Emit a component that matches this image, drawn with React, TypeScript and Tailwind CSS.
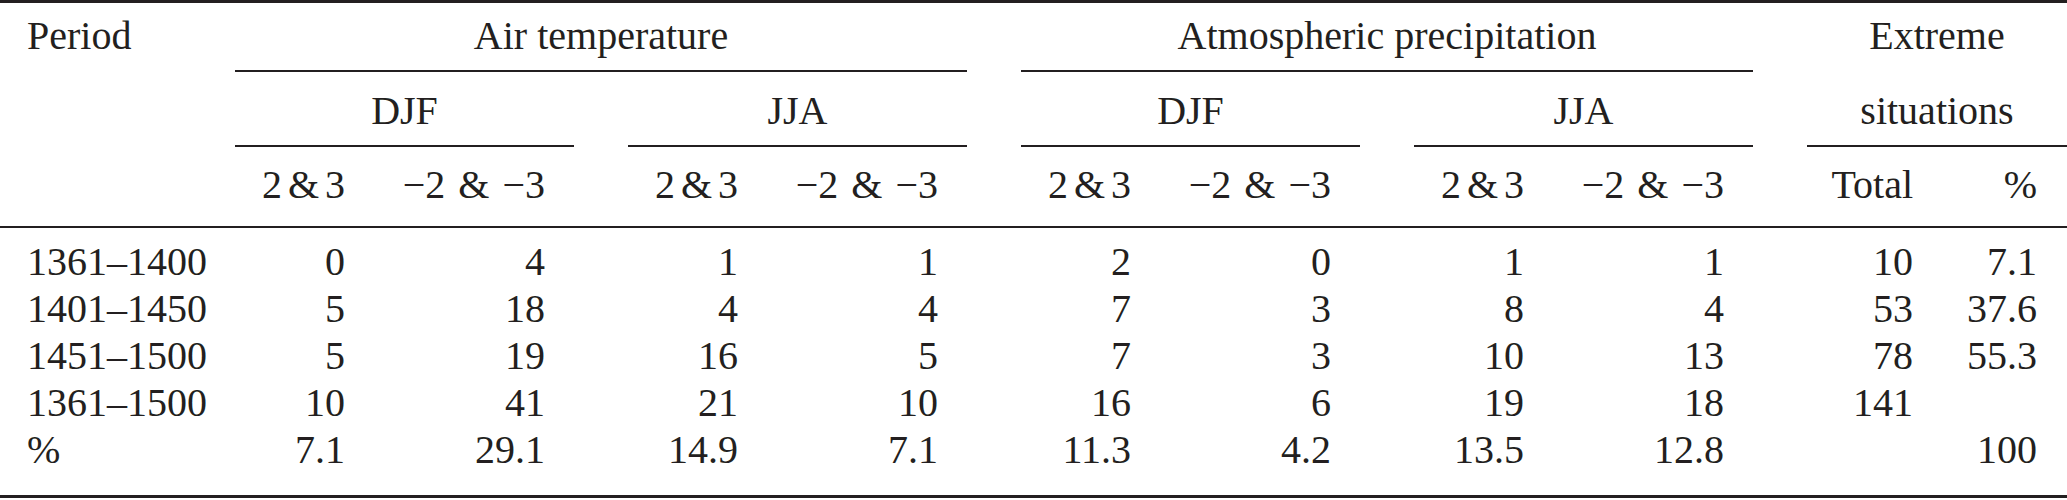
import React from "react";

const grid =
  "grid grid-cols-[235px_139px_200px_54px_139px_200px_54px_139px_200px_54px_139px_200px_54px_135px_125px]";

const rows: string[][] = [
  ["1361–1400", "0", "4", "1", "1", "2", "0", "1", "1", "10", "7.1"],
  ["1401–1450", "5", "18", "4", "4", "7", "3", "8", "4", "53", "37.6"],
  ["1451–1500", "5", "19", "16", "5", "7", "3", "10", "13", "78", "55.3"],
  ["1361–1500", "10", "41", "21", "10", "16", "6", "19", "18", "141", ""],
  ["%", "7.1", "29.1", "14.9", "7.1", "11.3", "4.2", "13.5", "12.8", "", "100"],
];

const Pos = () => (
  <span>
    2<span className="mx-[6px]">&amp;</span>3
  </span>
);

const Neg = () => (
  <span>
    −2<span className="mx-[13px]">&amp;</span>−3
  </span>
);

// values in order, with an empty spacer column between each pair
const Cells: React.FC<{ vals: React.ReactNode[] }> = ({ vals }) => {
  const out: React.ReactNode[] = [];
  vals.forEach((v, i) => {
    const last = i === vals.length - 1;
    out.push(
      <div key={i} className={last ? "text-right pr-[30px]" : "text-right pr-[29px]"}>
        {v}
      </div>
    );
    if (i % 2 === 1 && !last) out.push(<div key={"g" + i} />);
  });
  return <>{out}</>;
};

export default function App() {
  return (
    <div className="w-[2067px] h-[500px] overflow-hidden bg-white text-[#231f20] font-['Liberation_Serif',serif] text-[40px] leading-[47px]">
      {/* top rule */}
      <div className="h-[3px] bg-[#231f20]" />

      {/* header row 1 */}
      <div className={`${grid} mt-[9px]`}>
        <div className="pl-[27px]">Period</div>
        <div className="col-[2/7] text-center">Air temperature</div>
        <div className="col-[8/13] text-center">Atmospheric precipitation</div>
        <div className="col-[14/16] text-center">Extreme</div>
      </div>
      <div className={`${grid} h-[2px] mt-[11px]`}>
        <div className="col-[2/7] bg-[#231f20]" />
        <div className="col-[8/13] bg-[#231f20]" />
      </div>

      {/* header row 2 */}
      <div className={`${grid} mt-[15px]`}>
        <div className="col-[2/4] text-center">DJF</div>
        <div className="col-[5/7] text-center">JJA</div>
        <div className="col-[8/10] text-center">DJF</div>
        <div className="col-[11/13] text-center">JJA</div>
        <div className="col-[14/16] text-center">situations</div>
      </div>
      <div className={`${grid} h-[2px] mt-[11px]`}>
        <div className="col-[2/4] bg-[#231f20]" />
        <div className="col-[5/7] bg-[#231f20]" />
        <div className="col-[8/10] bg-[#231f20]" />
        <div className="col-[11/13] bg-[#231f20]" />
        <div className="col-[14/16] bg-[#231f20]" />
      </div>

      {/* header row 3 */}
      <div className={`${grid} mt-[14px]`}>
        <div />
        <Cells
          vals={[
            <Pos key="a" />, <Neg key="b" />,
            <Pos key="c" />, <Neg key="d" />,
            <Pos key="e" />, <Neg key="f" />,
            <Pos key="g" />, <Neg key="h" />,
            "Total", "%",
          ]}
        />
      </div>

      {/* mid rule */}
      <div className="h-[2px] bg-[#231f20] mt-[18px]" />

      {/* data */}
      <div className="mt-[10px]">
        {rows.map((r, i) => (
          <div key={i} className={grid}>
            <div className="pl-[27px]">{r[0]}</div>
            <Cells vals={r.slice(1)} />
          </div>
        ))}
      </div>

      {/* bottom rule */}
      <div className="h-[3px] bg-[#231f20] mt-[22px]" />
    </div>
  );
}
